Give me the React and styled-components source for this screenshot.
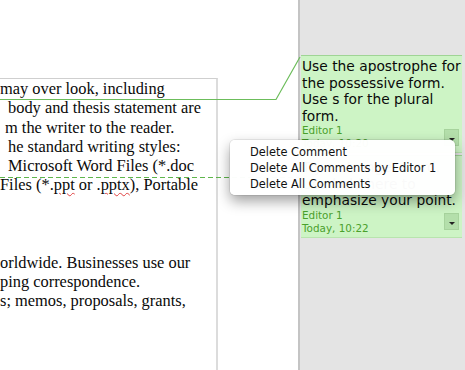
import React from 'react';
import styled, { createGlobalStyle } from 'styled-components';

const GlobalStyle = createGlobalStyle`
  html, body {
    margin: 0;
    padding: 0;
    overflow: hidden;
    background: #fff;
  }
`;

const Screen = styled.div`
  position: relative;
  display: flex;
  width: 465px;
  height: 370px;
  overflow: hidden;
`;

const Page = styled.div`
  width: 298px;
  flex-shrink: 0;
  background: #fff;
  padding-top: 78px;
  box-sizing: border-box;
`;

const TextFrame = styled.div`
  width: 218px;
  height: 100%;
  border-top: 1px solid #cfcfcf;
  border-right: 2px solid #dcdcdc;
  box-sizing: border-box;
  font-family: "Liberation Serif", "Times New Roman", serif;
  font-size: 16.4px;
  line-height: 19.3px;
  color: #0a0a0a;
  white-space: nowrap;
`;

const Line = styled.div`
  height: 19.3px;
  padding-left: ${(p) => p.indent || 0}px;
`;

const Squiggle = styled.span`
  text-decoration: underline wavy #e04040;
  text-decoration-thickness: 1px;
  text-underline-offset: 2px;
`;

const Sidebar = styled.div`
  flex: 1;
  background: #e4e4e4;
  border-left: 2px solid #c4c4c4;
  padding: 55px 3px 0 1px;
  display: flex;
  flex-direction: column;
  gap: 2px;
`;

const Comment = styled.div`
  background: #cdf4c5;
  border-top: 1px solid #9fd495;
  border-bottom: 1px solid #b8e4ae;
  padding: ${(p) => p.pad || 0}px 0 2px 1px;
  font-family: "Lucida Grande", "DejaVu Sans", sans-serif;
  color: #0a0a0a;
`;

const Body = styled.div`
  font-size: 13.8px;
  line-height: 16.5px;
  white-space: nowrap;
`;

const Footer = styled.div`
  display: flex;
  align-items: center;
  justify-content: space-between;
  padding-right: 3px;
`;

const Meta = styled.div`
  font-size: 10.4px;
  line-height: 13px;
  color: #4aa02c;
`;

const DropButton = styled.div`
  width: 15px;
  height: 17px;
  background: #b4dfab;
  border: 1px solid #a7d39d;
  box-sizing: border-box;
  display: flex;
  align-items: flex-end;
  justify-content: center;
  padding-bottom: 4px;
`;

const Arrow = styled.div`
  width: 0;
  height: 0;
  border-left: 3px solid transparent;
  border-right: 3px solid transparent;
  border-top: 3px solid #222;
`;

const Connectors = styled.svg`
  position: absolute;
  left: 0;
  top: 0;
  pointer-events: none;
`;

const Menu = styled.div`
  position: absolute;
  left: 230px;
  top: 140px;
  width: 225px;
  padding: 4px 0 3px;
  box-sizing: border-box;
  background: rgba(255, 255, 255, 0.975);
  border-radius: 5px;
  box-shadow: 0 6px 14px rgba(0, 0, 0, 0.38), 0 0 0 1px rgba(0, 0, 0, 0.07);
  font-family: "Lucida Grande", "DejaVu Sans", sans-serif;
  font-size: 11.4px;
  color: #111;
`;

const MenuItem = styled.div`
  padding-left: 20px;
  line-height: 16px;
  height: 16px;
`;

const docLines = [
  { indent: 0, text: 'may over look, including' },
  { indent: 8, text: 'body and thesis statement are' },
  { indent: 5, text: 'm the writer to the reader.' },
  { indent: 8, text: 'he standard writing styles:' },
  { indent: 8, text: 'Microsoft Word Files (*.doc' },
  { indent: 0, squiggle: true },
  {},
  {},
  {},
  { indent: 0, text: 'orldwide. Businesses use our' },
  { indent: 0, text: 'ping correspondence.' },
  { indent: 0, text: 's; memos, proposals, grants,' },
  {},
  {},
  {},
  { indent: 20, text: 'ne should be clear, Kodi Lemp Ca' },
];

export default function App() {
  return (
    <>
      <GlobalStyle />
      <Screen>
        <Page>
          <TextFrame>
            {docLines.map((l, i) => (
              <Line key={i} indent={l.indent}>
                {l.squiggle ? (
                  <>
                    Files (*.<Squiggle>ppt</Squiggle> or .<Squiggle>pptx</Squiggle>), Portable
                  </>
                ) : (
                  l.text
                )}
              </Line>
            ))}
          </TextFrame>
        </Page>
        <Sidebar>
          <Comment pad={2}>
            <Body>
              Use the apostrophe for
              <br />
              the possessive form.
              <br />
              Use s for the plural
              <br />
              form.
            </Body>
            <Footer>
              <Meta>
                Editor 1
                <br />
                Today, 10:20
              </Meta>
              <DropButton>
                <Arrow />
              </DropButton>
            </Footer>
          </Comment>
          <Comment pad={3}>
            <Body>
              Try a stronger word.
              <br />
              Use bold here to
              <br />
              emphasize your point.
            </Body>
            <Footer>
              <Meta>
                Editor 1
                <br />
                Today, 10:22
              </Meta>
              <DropButton>
                <Arrow />
              </DropButton>
            </Footer>
          </Comment>
        </Sidebar>
        <Connectors width="465" height="370">
          <polyline points="0,99.5 276,99.5 300,57" fill="none" stroke="#6cbd5b" strokeWidth="1.2" />
          <line x1="0" y1="177.5" x2="300" y2="177.5" stroke="#5fb64c" strokeWidth="1" strokeDasharray="5 3" />
        </Connectors>
        <Menu>
          <MenuItem>Delete Comment</MenuItem>
          <MenuItem>Delete All Comments by Editor 1</MenuItem>
          <MenuItem>Delete All Comments</MenuItem>
        </Menu>
      </Screen>
    </>
  );
}
